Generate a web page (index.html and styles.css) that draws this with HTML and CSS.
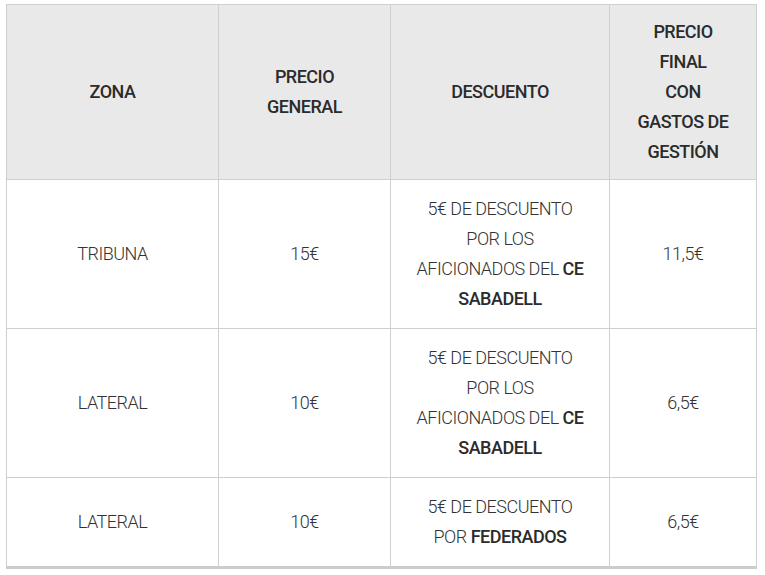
FILE: index.html
```html
<!DOCTYPE html>
<html lang="es">
<head>
<meta charset="utf-8">
<title>Precios</title>
<link rel="stylesheet" href="styles.css">
</head>
<body>
<div class="wrap">
<table class="prices">
  <colgroup>
    <col class="c1"><col class="c2"><col class="c3"><col class="c4">
  </colgroup>
  <thead>
    <tr>
      <th>ZONA</th>
      <th>PRECIO GENERAL</th>
      <th>DESCUENTO</th>
      <th>PRECIO<br>FINAL<br>CON<br>GASTOS DE<br>GESTIÓN</th>
    </tr>
  </thead>
  <tbody>
    <tr>
      <td>TRIBUNA</td>
      <td>15€</td>
      <td>5€ DE DESCUENTO POR LOS AFICIONADOS DEL <strong>CE SABADELL</strong></td>
      <td>11,5€</td>
    </tr>
    <tr>
      <td>LATERAL</td>
      <td>10€</td>
      <td>5€ DE DESCUENTO POR LOS AFICIONADOS DEL <strong>CE SABADELL</strong></td>
      <td>6,5€</td>
    </tr>
    <tr>
      <td>LATERAL</td>
      <td>10€</td>
      <td>5€ DE DESCUENTO POR <strong>FEDERADOS</strong></td>
      <td>6,5€</td>
    </tr>
  </tbody>
</table>
</div>
</body>
</html>
```

FILE: styles.css
```css
html, body {
  margin: 0;
  padding: 0;
  background: #ffffff;
}
.wrap {
  padding: 4px 0 0 6px;
}
.prices {
  width: 750px;
  border-collapse: collapse;
  table-layout: fixed;
  font-family: Roboto, "Liberation Sans", sans-serif;
  font-size: 18px;
  line-height: 30px;
  color: #333333;
}
.c1 { width: 212px; }
.c2 { width: 172px; }
.c3 { width: 219px; }
.c4 { width: 147px; }
.prices th,
.prices td {
  border: 1px solid #cfcfcf;
  text-align: center;
  vertical-align: middle;
}
.prices th {
  background: #e9e9e9;
  font-weight: 500;
  padding: 12px 25px;
  letter-spacing: -0.5px;
  color: #2b2b2b;
}
.prices td {
  font-weight: 300;
  padding: 14px 25px;
  letter-spacing: -0.5px;
}
.prices td strong {
  font-weight: 500;
  color: #2b2b2b;
}
.prices tbody tr:last-child td {
  border-bottom: 3px solid #cccccc;
}
```
